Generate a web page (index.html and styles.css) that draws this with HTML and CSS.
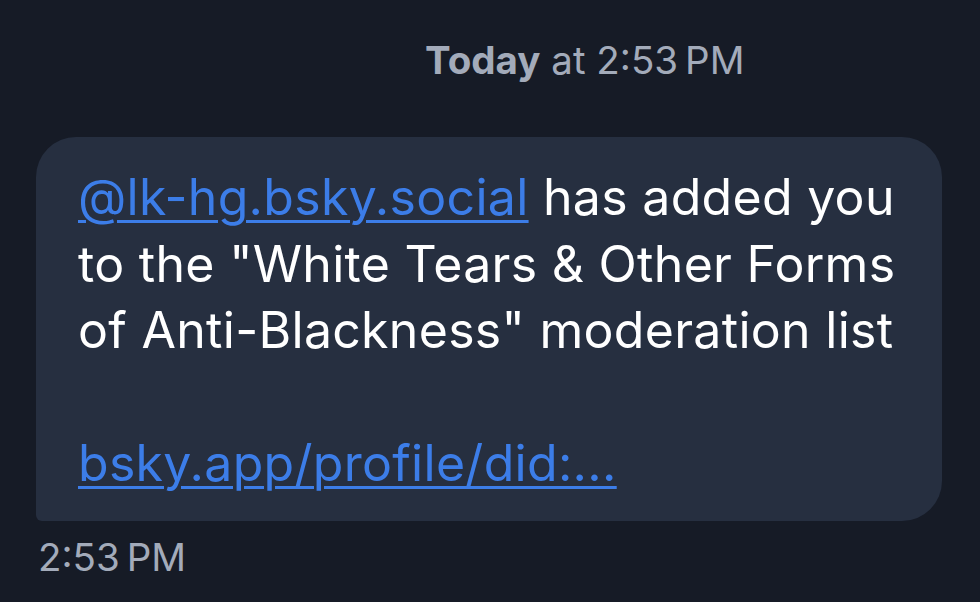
FILE: index.html
```html
<!DOCTYPE html>
<html>
<head>
<meta charset="utf-8">
<link rel="stylesheet" href="styles.css">
</head>
<body>
<div class="thread">
  <div class="day"><b>Today</b> at 2:53&#8239;PM</div>
  <div class="bubble">
    <p class="msg"><a href="#" class="link">@lk-hg.bsky.social</a> has added you to the "White Tears &amp; Other Forms of Anti-Blackness" moderation list</p>
    <p class="msg gap"><a href="#" class="link">bsky.app/profile/did:...</a></p>
  </div>
  <div class="time">2:53&#8239;PM</div>
</div>
</body>
</html>
```

FILE: styles.css
```css
html, body {
  margin: 0;
  padding: 0;
  background: #161b26;
  width: 980px;
  height: 602px;
  overflow: hidden;
}
.thread {
  font-family: Inter, "Noto Sans", sans-serif;
  display: flex;
  flex-direction: column;
  padding: 0 38px 0 36px;
}
.day {
  color: #a3abba;
  font-size: 38.5px;
  line-height: 44px;
  padding: 38px 0 0 389px;
  height: 137px;
  box-sizing: border-box;
}
.day b {
  font-weight: 700;
}
.bubble {
  background: #262f40;
  border-radius: 40px 40px 40px 6px;
  padding: 27px 30px 24px 42px;
  color: #ffffff;
  font-size: 50px;
  line-height: 66.5px;
  letter-spacing: 0.3px;
}
.msg {
  margin: 0;
}
.msg.gap {
  margin-top: 66.5px;
}
.link {
  color: #3c7de8;
  text-decoration: underline;
  text-decoration-thickness: 3px;
  text-underline-offset: 5px;
}
.time {
  color: #a3abba;
  font-size: 38.5px;
  line-height: 44px;
  padding: 14px 0 0 2px;
}
```
